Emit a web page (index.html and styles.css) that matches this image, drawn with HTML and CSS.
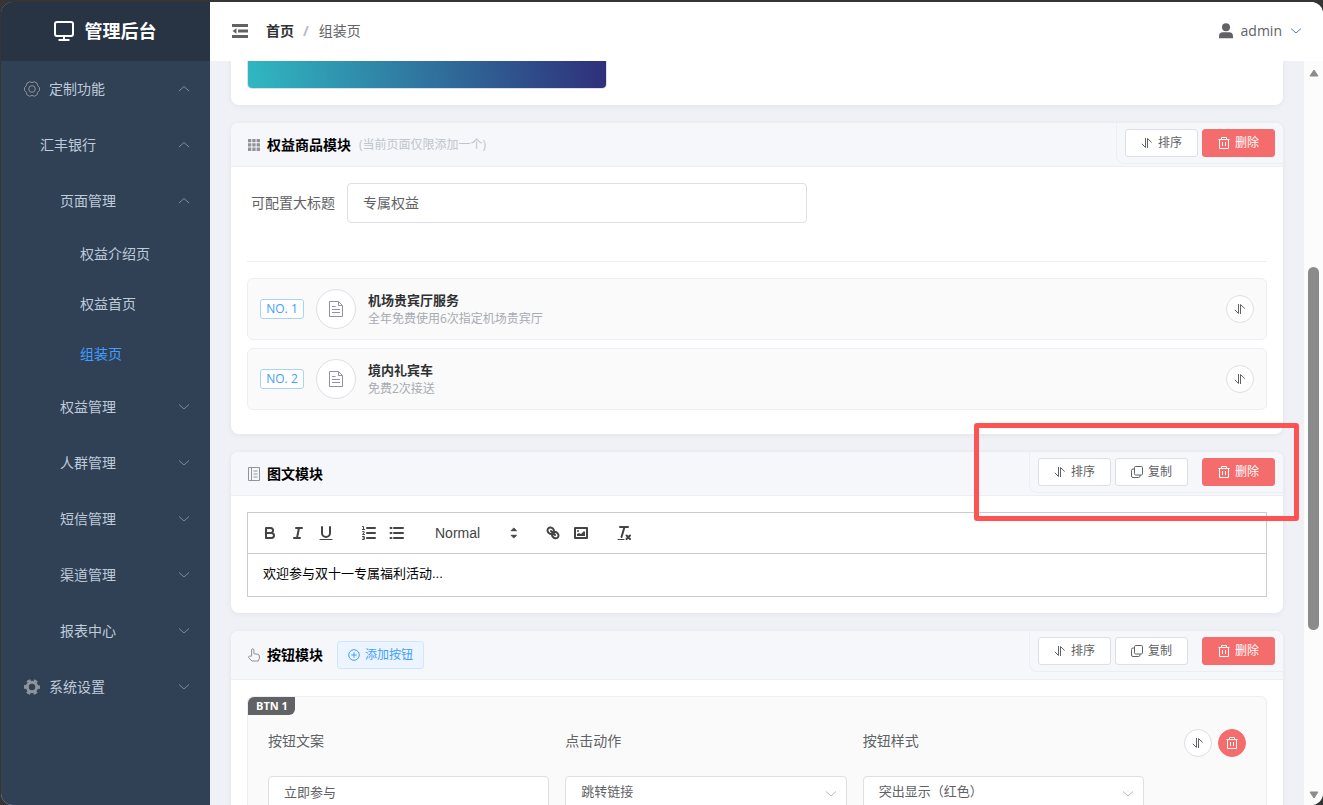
FILE: index.html
```html
<!DOCTYPE html>
<html lang="zh-CN">
<head>
<meta charset="utf-8">
<title>管理后台</title>
<link rel="stylesheet" href="styles.css">
</head>
<body>
<svg class="sprite" aria-hidden="true">
  <symbol id="up" viewBox="0 0 12 12"><path d="M1 8 6 3.500 11 8"/></symbol>
  <symbol id="down" viewBox="0 0 12 12"><path d="M1 3.500 6 8 11 3.500"/></symbol>
  <symbol id="sort" viewBox="0 0 12 12"><path d="M4.500 1v9.500L.8 6.800M6.500 11V1.500l4.200 4"/></symbol>
  <symbol id="copy" viewBox="0 0 12 12"><rect x="3.500" y=".5" width="8" height="8.500" rx="1.200"/><path d="M3.500 3H2Q.5 3 .5 4.500V10q0 1.500 1.500 1.500h5.500q1.500 0 1.500-1.500V9"/></symbol>
  <symbol id="trash" viewBox="0 0 12 12"><path d="M.5 2.500h11M3.500 2.500v-2h5v2M1.500 2.500v9h9v-9M4.500 5v4M7.500 5v4"/></symbol>
  <symbol id="doc" viewBox="0 0 16 16"><path d="M1.500.5h9l4 4v11h-13zM10.500.8v3.700h3.700M4 5.500h3.500M4 8.500h8M4 11.500h8"/></symbol>
</svg>
<div class="app">
  <aside class="sidebar">
    <div class="logo">
      <svg class="icon-monitor" viewBox="0 0 22 20"><rect x="2" y="1" width="18" height="14" rx="2"/><path d="M11 15v3.500M5.500 19h11"/></svg>
      <span>管理后台</span>
    </div>
    <nav class="menu">
      <button class="item lv1"><svg class="gear" viewBox="0 0 16 16"><path d="M5.500.8Q8 2.300 10.500.8l2.600 1.500q0 2.900 2.400 4.200v3q-2.400 1.300-2.400 4.200l-2.600 1.500Q8 13.700 5.500 15.200l-2.600-1.500q0-2.900-2.400-4.200v-3q2.400-1.300 2.400-4.200z"/><circle cx="8" cy="8" r="3.300"/></svg><span>定制功能</span><svg class="arrow"><use href="#up"/></svg></button>
      <button class="item lv2"><span>汇丰银行</span><svg class="arrow"><use href="#up"/></svg></button>
      <button class="item lv3"><span>页面管理</span><svg class="arrow"><use href="#up"/></svg></button>
      <a class="item lv4" href="#">权益介绍页</a>
      <a class="item lv4" href="#">权益首页</a>
      <a class="item lv4 active" href="#">组装页</a>
      <button class="item lv3"><span>权益管理</span><svg class="arrow"><use href="#down"/></svg></button>
      <button class="item lv3"><span>人群管理</span><svg class="arrow"><use href="#down"/></svg></button>
      <button class="item lv3"><span>短信管理</span><svg class="arrow"><use href="#down"/></svg></button>
      <button class="item lv3"><span>渠道管理</span><svg class="arrow"><use href="#down"/></svg></button>
      <button class="item lv3"><span>报表中心</span><svg class="arrow"><use href="#down"/></svg></button>
      <button class="item lv1"><svg class="gear" viewBox="0 0 16 16"><circle cx="8" cy="8" r="4.700" stroke-width="3"/><circle cx="8" cy="8" r="6.800" stroke-width="2.400" stroke-dasharray="3.800 3.320" stroke-dashoffset="1.900"/></svg><span>系统设置</span><svg class="arrow"><use href="#down"/></svg></button>
    </nav>
  </aside>

  <div class="page">
    <header class="topbar">
      <button class="fold" aria-label="收起菜单"><svg viewBox="0 0 16 14"><path d="M0 0h16v3H0zM6 5.500h10v3H6zM0 11h16v3H0zM.5 7l4-2.700v5.400z"/></svg></button>
      <a class="crumb-home" href="#">首页</a><span class="slash">/</span><span class="crumb">组装页</span>
      <button class="user"><svg class="avatar" viewBox="0 0 14 16"><circle cx="7" cy="4.300" r="4"/><path d="M0 15.300v-2q0-4 4-4h6q4 0 4 4v2z"/></svg><span>admin</span><svg class="chev"><use href="#down"/></svg></button>
    </header>
    <div class="viewport">
      <main class="content">
        <section class="card first"><div class="banner"></div></section>

        <section class="card">
          <header class="card-head">
            <svg class="head-icon grid-icon" viewBox="0 0 12 14"><path d="M0 1h3.300v3.300H0zM4.300 1h3.300v3.300H4.300zM8.600 1H12v3.300H8.600zM0 5.300h3.300v3.300H0zM4.300 5.300h3.300v3.300H4.300zM8.600 5.300H12v3.300H8.600zM0 9.600h3.300v3.300H0zM4.300 9.600h3.300v3.300H4.300zM8.600 9.600H12v3.300H8.600z"/></svg>
            <h2>权益商品模块</h2><small>(当前页面仅限添加一个)</small>
            <div class="tools">
              <button class="btn"><svg><use href="#sort"/></svg>排序</button>
              <button class="btn danger"><svg><use href="#trash"/></svg>删除</button>
            </div>
          </header>
          <div class="card-body">
            <div class="field-row"><label for="title">可配置大标题</label><input id="title" class="input" value="专属权益"></div>
            <hr>
            <ul class="goods">
              <li><span class="tag">NO. 1</span><span class="thumb"><svg><use href="#doc"/></svg></span><div class="info"><strong>机场贵宾厅服务</strong><p>全年免费使用6次指定机场贵宾厅</p></div><button class="round" aria-label="排序"><svg><use href="#sort"/></svg></button></li>
              <li><span class="tag">NO. 2</span><span class="thumb"><svg><use href="#doc"/></svg></span><div class="info"><strong>境内礼宾车</strong><p>免费2次接送</p></div><button class="round" aria-label="排序"><svg><use href="#sort"/></svg></button></li>
            </ul>
          </div>
        </section>

        <section class="card">
          <header class="card-head">
            <svg class="head-icon" viewBox="0 0 12 14"><path d="M.5.500h11v13H.5zM3.500.5v13M5.500 4h4M5.500 7h4M5.500 10h4"/></svg>
            <h2>图文模块</h2>
            <div class="tools">
              <button class="btn"><svg><use href="#sort"/></svg>排序</button>
              <button class="btn"><svg><use href="#copy"/></svg>复制</button>
              <button class="btn danger spaced"><svg><use href="#trash"/></svg>删除</button>
            </div>
          </header>
          <div class="card-body">
            <div class="editor">
              <div class="editor-bar">
                <div class="group">
                  <button aria-label="加粗"><svg viewBox="0 0 18 18"><path d="M5 4h4.500a2.500 2.500 0 0 1 0 5H5zM5 9h5.500a2.500 2.500 0 0 1 0 5H5z"/></svg></button>
                  <button aria-label="斜体"><svg viewBox="0 0 18 18"><path d="M7 4h6M5 14h6M8 14l2-10"/></svg></button>
                  <button aria-label="下划线"><svg viewBox="0 0 18 18"><path d="M5 3v6a4 4 0 0 0 8 0V3"/><path class="thin" d="M3 15.500h12"/></svg></button>
                </div>
                <div class="group">
                  <button aria-label="有序列表"><svg viewBox="0 0 18 18"><path d="M7 4h8M7 9h8M7 14h8"/><path class="thin" d="M2.500 2.500h1v3M2.300 5.500h2.400M2.500 7.700h1.700v1L2.500 10.500h2M2.500 12.500h1.800v3H2.500M3 14h1.300"/></svg></button>
                  <button aria-label="无序列表"><svg viewBox="0 0 18 18"><path d="M6 4h9M6 9h9M6 14h9M2.500 4h1M2.500 9h1M2.500 14h1"/></svg></button>
                </div>
                <div class="group picker">
                  <select aria-label="标题级别"><option>Normal</option></select>
                  <svg class="picker-icon" viewBox="0 0 18 18"><path class="solid" d="M6.500 11.300h5L9 13.700zM6.500 6.700h5L9 4.300z"/></svg>
                </div>
                <div class="group">
                  <button aria-label="链接"><svg viewBox="0 0 18 18"><path d="M7 7l4 4M8.900 4.600c1.300 1.300 1.400 3.200.2 4.400s-3.200 1-4.500-.2-1.500-3.100-.3-4.400 3.200-1.100 4.600.2zM13.400 9.100c1.300 1.300 1.500 3.200.3 4.400s-3.200 1.100-4.500-.2-1.400-3.100-.2-4.300 3.100-1.200 4.400.1z"/></svg></button>
                  <button aria-label="图片"><svg viewBox="0 0 18 18"><rect x="3" y="4" width="12" height="10"/><circle class="solid" cx="6" cy="7" r="1"/><path class="solid" d="M5 12v-2l2-1 2 1 3-3 1 1v4z"/></svg></button>
                </div>
                <div class="group">
                  <button aria-label="清除格式"><svg viewBox="0 0 18 18"><path d="M5 3h8M6.500 13 9.500 3M11.500 11.500l3.500 3.500M15 11.500 11.500 15"/><path class="thin" d="M3 15.500h6"/></svg></button>
                </div>
              </div>
              <div class="editor-text" contenteditable="true">欢迎参与双十一专属福利活动...</div>
            </div>
          </div>
          <div class="highlight"></div>
        </section>

        <section class="card">
          <header class="card-head">
            <svg class="head-icon" viewBox="0 0 12 14"><path d="M3.600 8.200V2q0-1.200 1.100-1.200T5.900 2v3.700l3.900.6q1.600.3 1.600 1.700v2l-1 3H4L.7 9.800Q.3 8.500 1.300 8z"/></svg>
            <h2>按钮模块</h2>
            <button class="btn add"><svg viewBox="0 0 12 12"><circle cx="6" cy="6" r="5.300"/><path d="M3.300 6h5.400M6 3.300v5.400"/></svg>添加按钮</button>
            <div class="tools">
              <button class="btn"><svg><use href="#sort"/></svg>排序</button>
              <button class="btn"><svg><use href="#copy"/></svg>复制</button>
              <button class="btn danger spaced"><svg><use href="#trash"/></svg>删除</button>
            </div>
          </header>
          <div class="card-body">
            <div class="panel">
              <span class="badge">BTN 1</span>
              <div class="panel-form">
                <div class="cell"><label for="text">按钮文案</label><input id="text" class="input small" value="立即参与"></div>
                <div class="cell"><label for="action">点击动作</label><div class="select"><select id="action" class="input small"><option>跳转链接</option></select><svg><use href="#down"/></svg></div></div>
                <div class="cell"><label for="look">按钮样式</label><div class="select"><select id="look" class="input small"><option>突出显示（红色）</option></select><svg><use href="#down"/></svg></div></div>
                <div class="row-actions">
                  <button class="round" aria-label="排序"><svg><use href="#sort"/></svg></button>
                  <button class="round danger" aria-label="删除"><svg><use href="#trash"/></svg></button>
                </div>
              </div>
            </div>
          </div>
        </section>
      </main>
      <div class="scrollbar">
        <svg viewBox="0 0 10 8"><path d="M5 1 9 7H1z"/></svg>
        <div class="track"><div class="thumb-bar"></div></div>
        <svg viewBox="0 0 10 8"><path d="M1 1h8L5 7z"/></svg>
      </div>
    </div>
  </div>
</div>
</body>
</html>
```
FILE: styles.css
```css
* { box-sizing: border-box; }
body {
  margin: 0;
  height: 100vh;
  padding: 2px 0 0 1px;
  overflow: hidden;
  background: #353535;
  color: #606266;
  font: 14px/20px "Open Sans", "Noto Sans CJK SC", sans-serif;
}
button, input, select { font: inherit; color: inherit; }
button { border: 0; background: none; padding: 0; cursor: pointer; }
a { color: inherit; text-decoration: none; }
svg { fill: none; stroke: currentColor; stroke-width: 1; flex: none; }
.sprite { position: absolute; width: 0; height: 0; }
.app { display: flex; height: 100%; border-radius: 12px; overflow: hidden; background: #eff1f6; }

.sidebar { width: 209px; flex: none; background: #304156; }
.logo {
  height: 59px; display: flex; align-items: center; justify-content: center; gap: 10px;
  padding: 0 2px 2px 0; background: #283444; color: #fff; font-size: 18px; font-weight: 700;
}
.icon-monitor { width: 22px; height: 20px; stroke-width: 2; }
.menu { display: flex; flex-direction: column; color: #bfcbd9; }
.item { display: flex; align-items: center; height: 56px; padding-right: 20px; text-align: left; }
.lv1 { padding-left: 23px; gap: 9px; }
.lv2 { padding-left: 39px; }
.lv3 { padding-left: 59px; }
.lv4 { padding-left: 79px; height: 50px; }
.active { color: #409eff; }
.gear { width: 16px; height: 16px; color: #909399; }
.arrow { width: 12px; height: 12px; margin-left: auto; color: #7f8a98; }

.page { flex: 1; min-width: 0; display: flex; flex-direction: column; }
.topbar { height: 59px; flex: none; display: flex; align-items: center; padding: 0 21px 2px 22px; background: #fff; }
.fold { display: flex; margin-right: 18px; }
.fold svg { width: 16px; height: 14px; fill: #606266; stroke: none; }
.crumb-home { color: #303133; font-weight: 700; }
.slash { margin: 0 10px 0 9px; color: #b4bac5; font-weight: 700; }
.user { display: flex; align-items: center; margin-left: auto; }
.avatar { width: 14px; height: 16px; margin-right: 8px; fill: currentColor; stroke: none; }
.chev { width: 12px; height: 12px; margin-left: 8px; color: #5d7f9f; }

.viewport { flex: 1; min-height: 0; display: flex; }
.content { flex: 1; min-width: 0; padding: 0 21px; overflow: hidden; }
.card {
  position: relative; margin-bottom: 18px; background: #fff;
  border-radius: 8px; box-shadow: 0 1px 4px 1px rgba(50, 60, 90, .05);
}
.first { border-radius: 0 0 8px 8px; padding: 0 17px 17px; }
.banner { width: 358px; height: 27px; border-radius: 0 0 4px 4px; background: linear-gradient(80deg, #30b8c2, #2f2f7a); box-shadow: 0 0 0 1px #dcdfe6; }
.card-head {
  display: flex; align-items: center; min-height: 44px; padding: 10px 17px;
  background: #f5f7fb; border-bottom: 1px solid #ebeef5; border-radius: 8px 8px 0 0;
}
.head-icon { width: 12px; height: 14px; margin-right: 7px; color: #909399; }
.grid-icon { fill: currentColor; stroke: none; }
h2 { margin: 0; color: #000; font-size: 14px; line-height: 20px; font-weight: 700; }
small { margin-left: 8px; font-size: 12px; line-height: 20px; color: #c0c4cc; }
.tools {
  position: absolute; top: 0; right: 0; display: flex; gap: 4px; padding: 6px 8px;
  border: 1px solid #ebeef5; border-width: 0 0 1px 1px; border-radius: 0 8px 0 8px; background: #f5f7fb;
}
.btn {
  display: flex; align-items: center; justify-content: center; gap: 5px; min-width: 73px; height: 28px;
  padding: 0 10px; border: 1px solid #dcdfe6; border-radius: 3px; background: #fff; font-size: 12px; line-height: 18px;
}
.btn svg, .round svg { width: 12px; height: 12px; }
.danger { background: #f56c6c; border-color: #f56c6c; color: #fff; }
.spaced { margin-left: 10px; }
.add { margin-left: 14px; background: #ecf5ff; border-color: #d0e6fd; color: #409eff; }
.card-body { padding: 16px; }

.field-row { display: flex; align-items: center; }
.field-row label { padding: 0 12px 0 4px; }
.input {
  width: 460px; height: 40px; padding: 0 15px 2px; border: 1px solid #dcdfe6; border-radius: 4px;
  background: #fff; appearance: none; outline: none;
}
.input.small { width: 100%; font-size: 13px; padding-bottom: 10px; }
hr { margin: 38px 0 16px; border: 0; border-top: 1px solid #ebeef5; }
.goods { margin: 0; padding: 0; list-style: none; }
.goods li {
  display: flex; align-items: center; gap: 12px; margin-bottom: 8px; padding: 10px 12px;
  background: #fafafa; border: 1px solid #ebeef5; border-radius: 6px;
}
.tag { min-width: 44px; height: 20px; border: 1px solid #a9d2fc; border-radius: 3px; background: #fff; color: #409eff; font-size: 12px; line-height: 18px; text-align: center; }
.thumb { display: flex; align-items: center; justify-content: center; width: 40px; height: 40px; border: 1px solid #dcdfe6; border-radius: 50%; background: #fff; color: #909399; }
.thumb svg { width: 16px; height: 16px; }
.info { flex: 1; padding-top: 2px; }
.info strong { display: block; color: #303133; font-size: 13px; line-height: 18px; }
.info p { margin: 0; color: #a8abb2; font-size: 12px; line-height: 20px; }
.round { display: flex; align-items: center; justify-content: center; width: 28px; height: 28px; border: 1px solid #dcdfe6; border-radius: 50%; background: #fff; }
.round.danger { background: #f56c6c; border-color: #f56c6c; }

.editor { border: 1px solid #ccc; font-family: "Liberation Sans", "Noto Sans CJK SC", sans-serif; }
.editor-bar { display: flex; gap: 15px; padding: 8px; border-bottom: 1px solid #ccc; color: #444; }
.group { display: flex; }
.group button { width: 28px; height: 24px; padding: 3px 5px; }
.group svg { display: block; width: 18px; height: 18px; stroke-width: 2; stroke-linecap: round; stroke-linejoin: round; }
.group .thin { stroke-width: 1; }
.group .solid { fill: currentColor; stroke-width: 1; }
.group button .solid { stroke: none; }
.picker { position: relative; width: 98px; }
.picker select { width: 100%; height: 24px; padding: 0 9px; border: 0; background: none; appearance: none; font-weight: 500; }
.picker .picker-icon { position: absolute; top: 3px; right: 1px; pointer-events: none; }
.editor-text { padding: 9px 15px 11px; color: #000; font-size: 13px; line-height: 22px; outline: none; }
.highlight { position: absolute; top: -29px; right: -16px; width: 325px; height: 98px; border: 5px solid #ff5252; border-radius: 3px; pointer-events: none; }

.panel { position: relative; padding: 32px 20px 20px; background: #fafafa; border: 1px solid #ebeef5; border-radius: 6px; }
.badge { position: absolute; top: 0; left: 0; padding: 0 7px 0 8px; background: #606266; color: #fff; font-size: 11px; line-height: 18px; font-weight: 700; border-radius: 6px 0 6px 0; }
.panel-form { display: grid; grid-template-columns: repeat(3, 1fr) 86px; gap: 16px; }
.cell label { display: block; padding-top: 2px; margin-bottom: 25px; }
.select { position: relative; }
.select svg { position: absolute; right: 10px; top: 12px; width: 12px; height: 12px; color: #b4b8c0; pointer-events: none; }
.row-actions { display: flex; justify-content: flex-end; gap: 6px; }

.scrollbar { width: 19px; flex: none; display: flex; flex-direction: column; align-items: center; padding: 8px 0 6px; background: #fcfcfc; color: #8b8b8b; }
.scrollbar svg { width: 10px; height: 8px; fill: currentColor; stroke-linejoin: round; }
.track { flex: 1; width: 11px; display: flex; flex-direction: column; }
.track::before { content: ""; flex: 190; }
.track::after { content: ""; flex: 161; }
.thumb-bar { flex: 363; border-radius: 6px; background: #8b8b8b; }
```
